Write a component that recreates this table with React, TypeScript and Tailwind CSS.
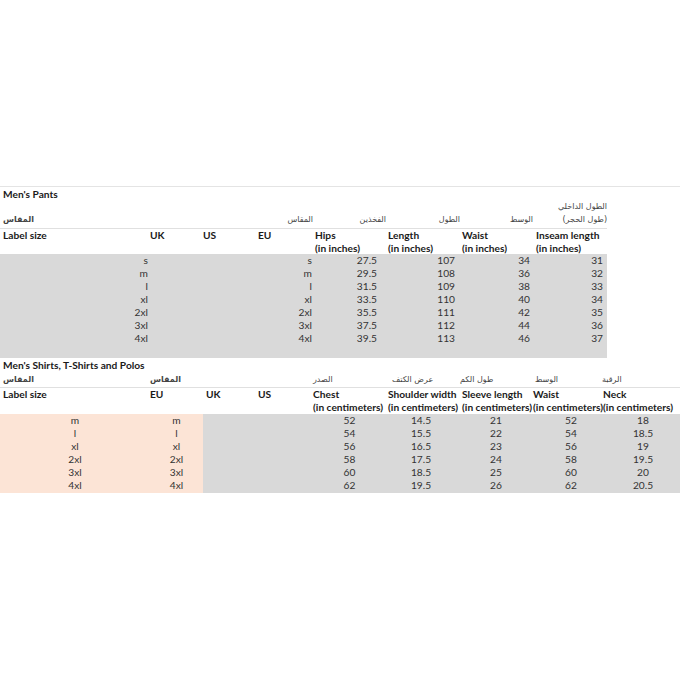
import React from "react";

const pants = [
  ["s", "s", "27.5", "107", "34", "31"],
  ["m", "m", "29.5", "108", "36", "32"],
  ["l", "l", "31.5", "109", "38", "33"],
  ["xl", "xl", "33.5", "110", "40", "34"],
  ["2xl", "2xl", "35.5", "111", "42", "35"],
  ["3xl", "3xl", "37.5", "112", "44", "36"],
  ["4xl", "4xl", "39.5", "113", "46", "37"],
];

const shirts = [
  ["m", "m", "52", "14.5", "21", "52", "18"],
  ["l", "l", "54", "15.5", "22", "54", "18.5"],
  ["xl", "xl", "56", "16.5", "23", "56", "19"],
  ["2xl", "2xl", "58", "17.5", "24", "58", "19.5"],
  ["3xl", "3xl", "60", "18.5", "25", "60", "20"],
  ["4xl", "4xl", "62", "19.5", "26", "62", "20.5"],
];

const g1 = "grid grid-cols-[150px_53px_53px_57px_73px_74px_73px_74px]";
const g2 = "grid grid-cols-[150px_53px_53px_55px_75px_74px_72px_70px_78px]";
const ar = "font-['DejaVu_Sans',sans-serif] text-[8px] text-[#444]";

export default function App() {
  return (
    <div className="w-[680px] h-[680px] bg-white pt-[186px] font-['Lato','DejaVu_Sans',sans-serif] text-[10.2px] leading-[13px] text-[#1a1a1a] overflow-hidden">
      {/* Section 1 */}
      <div className="border-t border-[#e4e4e4]">
        <div className="w-[607px]">
          <div className="h-[13px] pl-[3px] pt-[1px] font-bold whitespace-nowrap">Men's Pants</div>
          <div className={`${g1} h-[29px] items-end pb-[3px] border-b border-[#e0e0e0]`}>
            <div dir="rtl" className={`${ar} text-[#111] font-bold pl-[3px]`} style={{ textAlign: "left" }}>المقاس</div>
            <div />
            <div />
            <div dir="rtl" className={`${ar} pl-[1px]`}>المقاس</div>
            <div dir="rtl" className={`${ar} pl-[11px]`}>الفخذين</div>
            <div dir="rtl" className={`${ar} pl-[10px]`}>الطول</div>
            <div dir="rtl" className={`${ar} pl-[9px]`}>الوسط</div>
            <div dir="rtl" className={`${ar} pl-[1px] leading-[13px]`}>
              <div>الطول الداخلي</div>
              <div>(طول الحجر)</div>
            </div>
          </div>
          <div className={`${g1} h-[25px] font-bold whitespace-nowrap`}>
            <div className="pl-[3px]">Label size</div>
            <div className="pl-[0px]">UK</div>
            <div className="pl-[0px]">US</div>
            <div className="pl-[2px]">EU</div>
            <div className="pl-[2px]">Hips<div>(in inches)</div></div>
            <div className="pl-[2px]">Length<div>(in inches)</div></div>
            <div className="pl-[2px]">Waist<div>(in inches)</div></div>
            <div className="pl-[3px]">Inseam length<div>(in inches)</div></div>
          </div>
          <div className="bg-[#d9d9d9] pb-[13px] text-[#333]">
            {pants.map((r, i) => (
              <div key={i} className={`${g1} h-[13px]`}>
                <div className="text-right pr-[2px]">{r[0]}</div>
                <div />
                <div />
                <div className="text-right pr-[1px]">{r[1]}</div>
                <div className="text-right pr-[9px]">{r[2]}</div>
                <div className="text-right pr-[5px]">{r[3]}</div>
                <div className="text-right pr-[3px]">{r[4]}</div>
                <div className="text-right pr-[4px]">{r[5]}</div>
              </div>
            ))}
          </div>
        </div>
      </div>

      {/* Section 2 */}
      <div className="h-[14px] pl-[3px] pt-[1px] font-bold whitespace-nowrap">Men's Shirts, T-Shirts and Polos</div>
      <div className={`${g2} h-[16px] items-center border-b border-[#e0e0e0]`}>
        <div dir="rtl" className={`${ar} text-[#111] font-bold pl-[3px]`} style={{ textAlign: "left" }}>المقاس</div>
        <div dir="rtl" className={`${ar} text-[#111] font-bold`} style={{ textAlign: "left" }}>المقاس</div>
        <div />
        <div />
        <div dir="rtl" className={`${ar} pl-[2px]`} style={{ textAlign: "left" }}>الصدر</div>
        <div dir="rtl" className={`${ar} pl-[6px]`} style={{ textAlign: "left" }}>عرض الكتف</div>
        <div dir="rtl" className={`${ar}`} style={{ textAlign: "left" }}>طول الكم</div>
        <div dir="rtl" className={`${ar} pl-[3px]`} style={{ textAlign: "left" }}>الوسط</div>
        <div dir="rtl" className={`${ar}`} style={{ textAlign: "left" }}>الرقبة</div>
      </div>
      <div className={`${g2} h-[26px] font-bold whitespace-nowrap`}>
        <div className="pl-[3px]">Label size</div>
        <div>EU</div>
        <div className="pl-[3px]">UK</div>
        <div className="pl-[2px]">US</div>
        <div className="pl-[2px]">Chest<div>(in centimeters)</div></div>
        <div className="pl-[2px]">Shoulder width<div>(in centimeters)</div></div>
        <div className="pl-[2px]">Sleeve length<div>(in centimeters)</div></div>
        <div className="pl-[1px]">Waist<div>(in centimeters)</div></div>
        <div className="pl-[1px]">Neck<div>(in centimeters)</div></div>
      </div>
      <div className="grid grid-cols-[203px_477px] text-[#333]">
        <div className="bg-[#fce4d6] pb-[1px]">
          {shirts.map((r, i) => (
            <div key={i} className="grid grid-cols-[150px_53px] h-[13px] text-center">
              <div>{r[0]}</div>
              <div>{r[1]}</div>
            </div>
          ))}
        </div>
        <div className="bg-[#d9d9d9] pb-[1px]">
          {shirts.map((r, i) => (
            <div key={i} className="grid grid-cols-[53px_55px_75px_74px_72px_70px_78px] h-[13px] text-center">
              <div />
              <div />
              <div className="pl-[2px]">{r[2]}</div>
              <div className="pr-[4px]">{r[3]}</div>
              <div>{r[4]}</div>
              <div className="pl-[8px]">{r[5]}</div>
              <div className="pl-[4px]">{r[6]}</div>
            </div>
          ))}
        </div>
      </div>
    </div>
  );
}
